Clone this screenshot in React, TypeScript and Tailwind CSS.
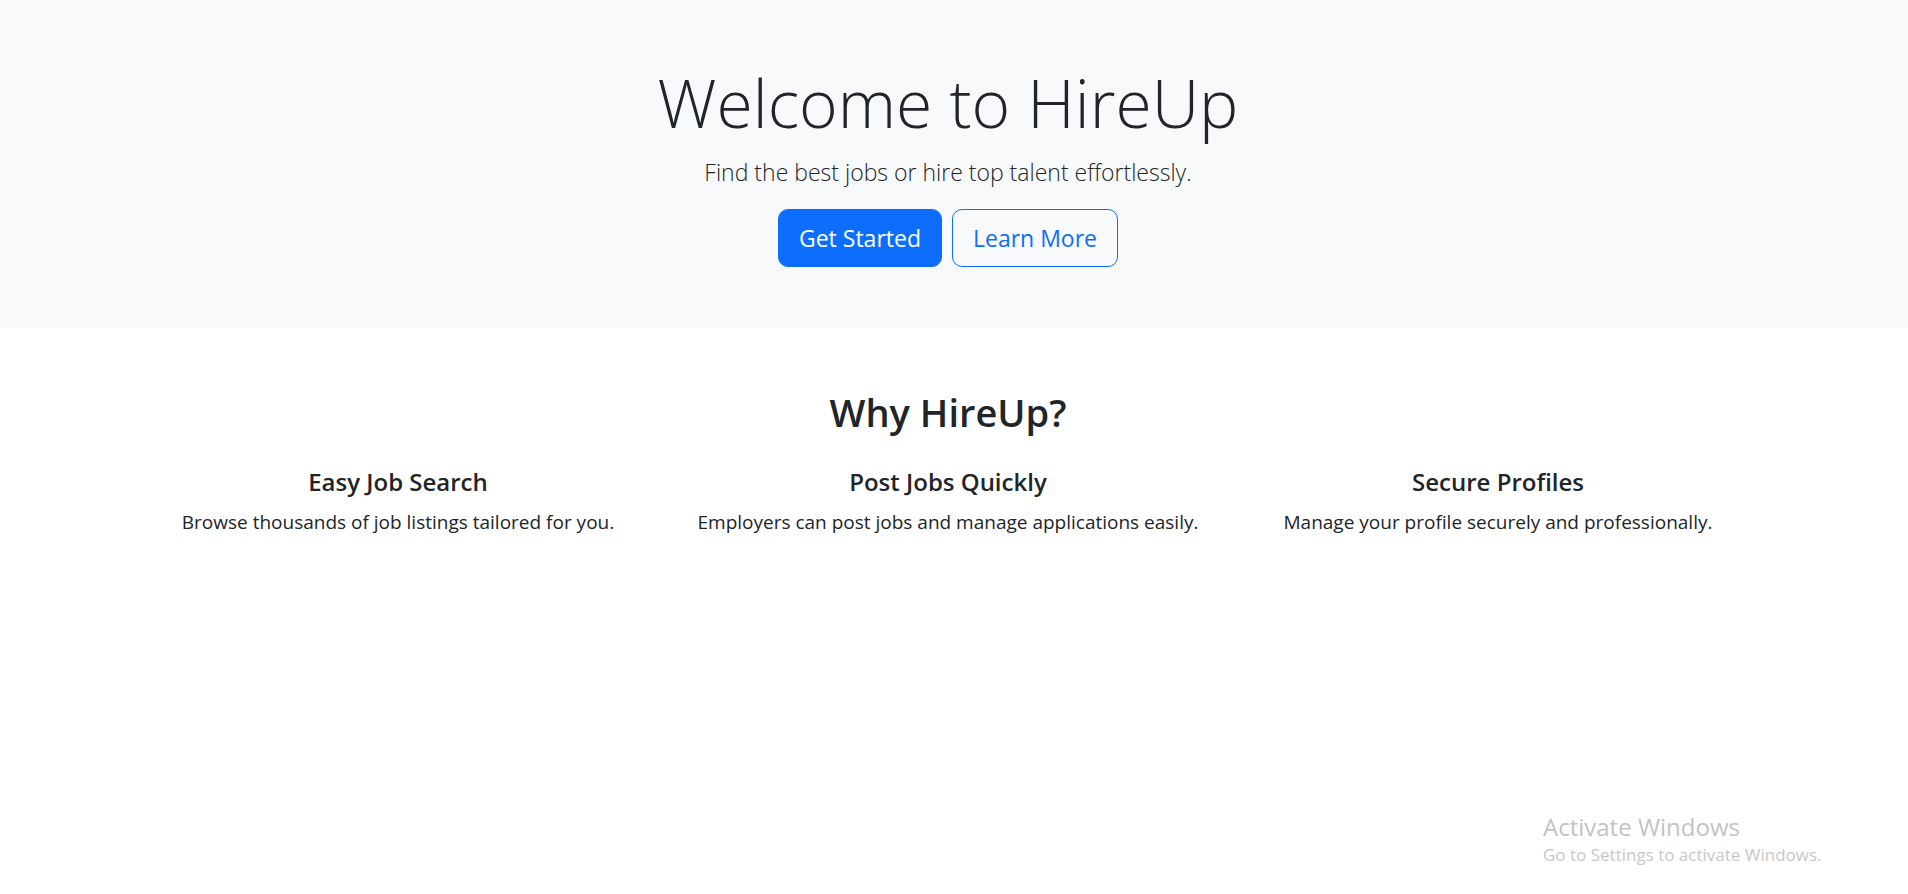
import React from "react";

const features = [
  {
    title: "Easy Job Search",
    text: "Browse thousands of job listings tailored for you.",
  },
  {
    title: "Post Jobs Quickly",
    text: "Employers can post jobs and manage applications easily.",
  },
  {
    title: "Secure Profiles",
    text: "Manage your profile securely and professionally.",
  },
];

function Hero() {
  return (
    <section className="bg-[#f8f9fa] pt-[60px] pb-[61px] pr-[12px] text-center">
      <h1 className="mb-[10px] text-[66px] font-light leading-[84px] text-[#212529]">
        Welcome to HireUp
      </h1>
      <p className="mb-[18px] text-[23px] font-light leading-[37px] text-[#212529]">
        Find the best jobs or hire top talent effortlessly.
      </p>
      <div className="flex items-center justify-center gap-[10px]">
        <a
          href="#"
          className="flex h-[58px] items-center rounded-[10px] border border-[#0d6efd] bg-[#0d6efd] px-[20px] text-[23px] text-white"
        >
          Get Started
        </a>
        <a
          href="#"
          className="flex h-[58px] items-center rounded-[10px] border border-[#0d6efd] px-[20px] text-[23px] text-[#0d6efd]"
        >
          Learn More
        </a>
      </div>
    </section>
  );
}

function Features() {
  return (
    <section className="pt-[60px] pr-[12px] text-center">
      <h2 className="mb-[28px] text-[38px] font-semibold leading-[48px] text-[#212529]">
        Why HireUp?
      </h2>
      <div className="mx-auto grid w-[1650px] grid-cols-3">
        {features.map((f) => (
          <div key={f.title} className="px-[8px]">
            <h4 className="mb-[7px] text-[24px] font-semibold leading-[36px] text-[#212529]">
              {f.title}
            </h4>
            <p className="text-[19px] leading-[30px] text-[#212529]">{f.text}</p>
          </div>
        ))}
      </div>
    </section>
  );
}

export default function App() {
  return (
    <div
      className="relative h-[894px] overflow-hidden bg-white"
      style={{ fontFamily: '"Open Sans", "Noto Sans", sans-serif' }}
    >
      <Hero />
      <Features />
      <div className="absolute left-[1543px] top-[812px] text-left leading-tight">
        <div className="text-[24px] text-[#c3c3c3]">Activate Windows</div>
        <div className="mt-[2px] text-[17px] text-[#c8c8c8]">
          Go to Settings to activate Windows.
        </div>
      </div>
    </div>
  );
}
